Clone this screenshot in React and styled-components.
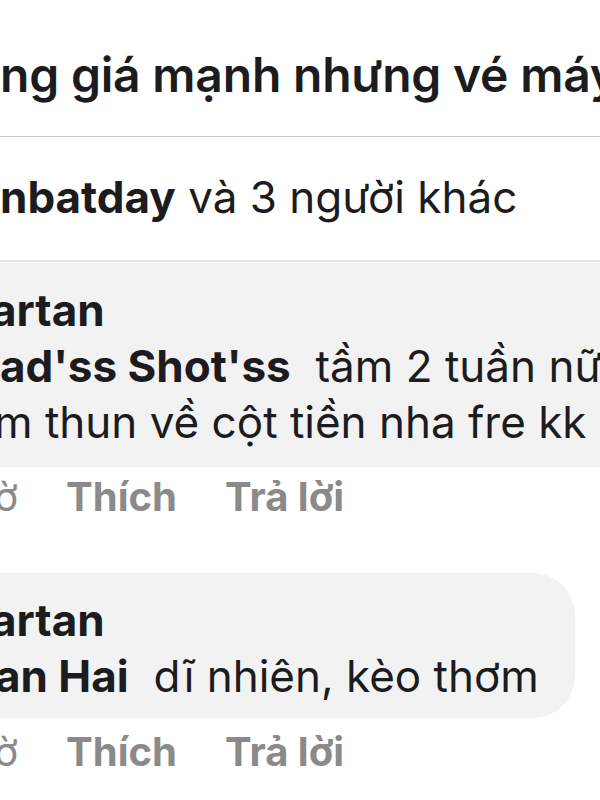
import styled, { createGlobalStyle } from 'styled-components';

const GlobalStyle = createGlobalStyle`
    html, body {
        margin: 0;
        padding: 0;
        background: #fff;
    }
    body {
        font-family: Inter, "Noto Sans", "DejaVu Sans", sans-serif;
        color: #1c1c1e;
    }
`;

export default function App() {
    return (
        <>
            <GlobalStyle />
            <Screen>
                <Title>ng giá mạnh nhưng vé máy bay</Title>

                <Likes>
                    <b>nbatday</b> và 3 người khác
                </Likes>

                <Bubble wide>
                    <Author>artan</Author>
                    <Line>
                        <b>ad'ss Shot'ss</b>&nbsp; tầm 2 tuần nữa
                    </Line>
                    <Line shift={-6}>m thun về cột tiền nha fre kk</Line>
                </Bubble>

                <Actions>
                    <Time>giờ</Time>
                    <span>Thích</span>
                    <span>Trả lời</span>
                </Actions>

                <Bubble>
                    <Author>artan</Author>
                    <Line shift={-5}>
                        <b>an Hai</b>&nbsp; dĩ nhiên, kèo thơm
                    </Line>
                </Bubble>

                <Actions last>
                    <Time>giờ</Time>
                    <span>Thích</span>
                    <span>Trả lời</span>
                </Actions>
            </Screen>
        </>
    );
}

const Screen = styled.div`
    width: 600px;
    height: 800px;
    overflow: hidden;
    display: flex;
    flex-direction: column;
    > * {
        flex-shrink: 0;
    }
`;
const Title = styled.div`
    height: 137px;
    box-sizing: border-box;
    padding-top: 47px;
    border-bottom: 1px solid #c8c8c8;
    font-size: 48px;
    line-height: 56px;
    font-weight: 600;
    white-space: nowrap;
    letter-spacing: -0.2px;
`;
const Likes = styled.div`
    height: 125px;
    box-sizing: border-box;
    padding-top: 32px;
    border-bottom: 2px solid #e6e6e6;
    font-size: 44px;
    line-height: 56px;
    white-space: nowrap;
    b {
        font-weight: 700;
    }
`;
const Bubble = styled.div`
    background: #f2f2f2;
    box-sizing: border-box;
    margin-left: -40px;
    padding: 19px 0 0 40px;
    width: ${p => (p.wide ? '700px' : '615px')};
    height: ${p => (p.wide ? '204px' : '145px')};
    margin-top: ${p => (p.wide ? '1px' : '0')};
    border-radius: ${p => (p.wide ? '0' : '0 42px 42px 0')};
    white-space: nowrap;
`;
const Author = styled.div`
    font-size: 44px;
    line-height: 56px;
    font-weight: 700;
    margin-left: -9px;
`;
const Line = styled.div`
    font-size: 44px;
    line-height: 56px;
    margin-left: ${p => p.shift || 0}px;
    b {
        font-weight: 700;
    }
`;
const Actions = styled.div`
    display: flex;
    gap: 48px;
    height: ${p => (p.last ? '80px' : '106px')};
    padding-top: ${p => (p.last ? '6px' : '2px')};
    box-sizing: border-box;
    font-size: 40px;
    line-height: 56px;
    font-weight: 700;
    color: #8a8a8a;
    white-space: nowrap;
`;
const Time = styled.span`
    font-weight: 400;
    margin-left: -40px;
`;
